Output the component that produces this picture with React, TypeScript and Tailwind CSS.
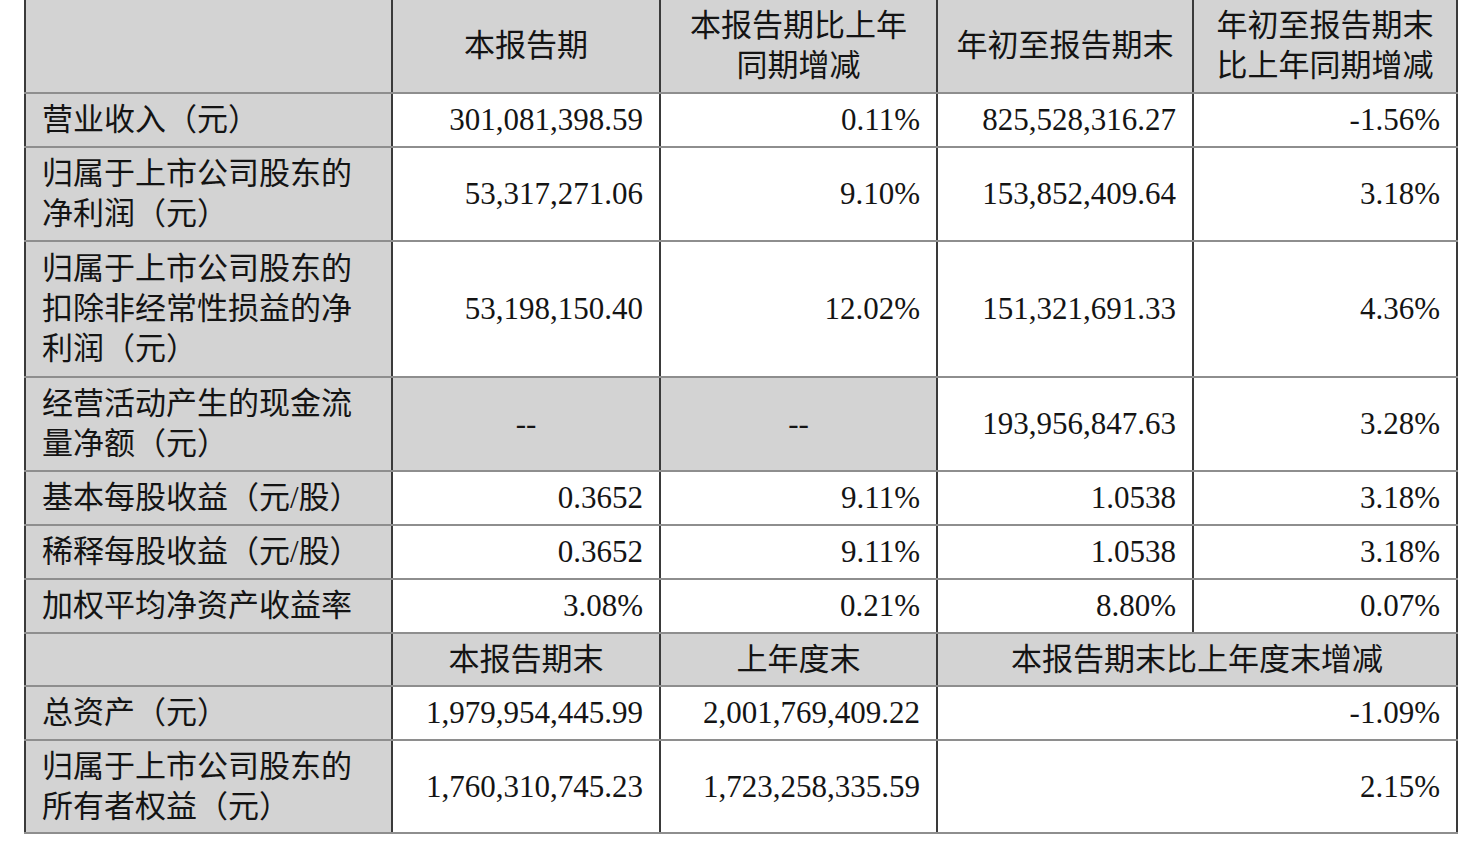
import React from "react";

type Row = {
  label: React.ReactNode;
  h: string;
  cells: { v: string; gray?: boolean; center?: boolean; span?: number }[];
};

const rows: Row[] = [
  {
    label: "营业收入（元）",
    h: "h-[54px]",
    cells: [{ v: "301,081,398.59" }, { v: "0.11%" }, { v: "825,528,316.27" }, { v: "-1.56%" }],
  },
  {
    label: (
      <>
        归属于上市公司股东的
        <br />
        净利润（元）
      </>
    ),
    h: "h-[94px]",
    cells: [{ v: "53,317,271.06" }, { v: "9.10%" }, { v: "153,852,409.64" }, { v: "3.18%" }],
  },
  {
    label: (
      <>
        归属于上市公司股东的
        <br />
        扣除非经常性损益的净
        <br />
        利润（元）
      </>
    ),
    h: "h-[136px]",
    cells: [{ v: "53,198,150.40" }, { v: "12.02%" }, { v: "151,321,691.33" }, { v: "4.36%" }],
  },
  {
    label: (
      <>
        经营活动产生的现金流
        <br />
        量净额（元）
      </>
    ),
    h: "h-[94px]",
    cells: [
      { v: "--", gray: true, center: true },
      { v: "--", gray: true, center: true },
      { v: "193,956,847.63" },
      { v: "3.28%" },
    ],
  },
  {
    label: "基本每股收益（元/股）",
    h: "h-[54px]",
    cells: [{ v: "0.3652" }, { v: "9.11%" }, { v: "1.0538" }, { v: "3.18%" }],
  },
  {
    label: "稀释每股收益（元/股）",
    h: "h-[54px]",
    cells: [{ v: "0.3652" }, { v: "9.11%" }, { v: "1.0538" }, { v: "3.18%" }],
  },
  {
    label: "加权平均净资产收益率",
    h: "h-[54px]",
    cells: [{ v: "3.08%" }, { v: "0.21%" }, { v: "8.80%" }, { v: "0.07%" }],
  },
];

const bottomRows: Row[] = [
  {
    label: "总资产（元）",
    h: "h-[54px]",
    cells: [{ v: "1,979,954,445.99" }, { v: "2,001,769,409.22" }, { v: "-1.09%", span: 2 }],
  },
  {
    label: (
      <>
        归属于上市公司股东的
        <br />
        所有者权益（元）
      </>
    ),
    h: "h-[93px]",
    cells: [{ v: "1,760,310,745.23" }, { v: "1,723,258,335.59" }, { v: "2.15%", span: 2 }],
  },
];

const cell = "border-x-2 border-x-[#3a3a3a] border-y-2 border-y-[#8e8e8e] px-[16px] py-0 align-middle";

function BodyRow({ row }: { row: Row }) {
  return (
    <tr className={row.h}>
      <td className={`${cell} bg-[#d3d3d3] text-left`}>{row.label}</td>
      {row.cells.map((c, i) => (
        <td
          key={i}
          colSpan={c.span ?? 1}
          className={`${cell} ${c.gray ? "bg-[#d3d3d3]" : "bg-white"} ${c.center ? "text-center" : "text-right"}`}
        >
          {c.v}
        </td>
      ))}
    </tr>
  );
}

export default function App() {
  return (
    <div className="w-[1467px] h-[842px] bg-white overflow-hidden">
      <div className="pl-[24px] -mt-[2px]">
        <table
          className="table-fixed border-collapse w-[1432px] text-[31px] leading-[40px] text-[#141414] border-2 border-[#333]"
          style={{ fontFamily: '"Liberation Serif", "Noto Sans CJK SC", serif' }}
        >
          <colgroup>
            <col className="w-[367px]" />
            <col className="w-[268px]" />
            <col className="w-[277px]" />
            <col className="w-[256px]" />
            <col className="w-[264px]" />
          </colgroup>
          <tbody>
            <tr className="h-[94px] bg-[#d3d3d3] text-center">
              <td className={cell}></td>
              <td className={cell}>本报告期</td>
              <td className={cell}>
                本报告期比上年
                <br />
                同期增减
              </td>
              <td className={cell}>年初至报告期末</td>
              <td className={cell}>
                年初至报告期末
                <br />
                比上年同期增减
              </td>
            </tr>
            {rows.map((r, i) => (
              <BodyRow key={i} row={r} />
            ))}
            <tr className="h-[53px] bg-[#d3d3d3] text-center">
              <td className={cell}></td>
              <td className={cell}>本报告期末</td>
              <td className={cell}>上年度末</td>
              <td className={cell} colSpan={2}>
                本报告期末比上年度末增减
              </td>
            </tr>
            {bottomRows.map((r, i) => (
              <BodyRow key={i} row={r} />
            ))}
          </tbody>
        </table>
      </div>
    </div>
  );
}
